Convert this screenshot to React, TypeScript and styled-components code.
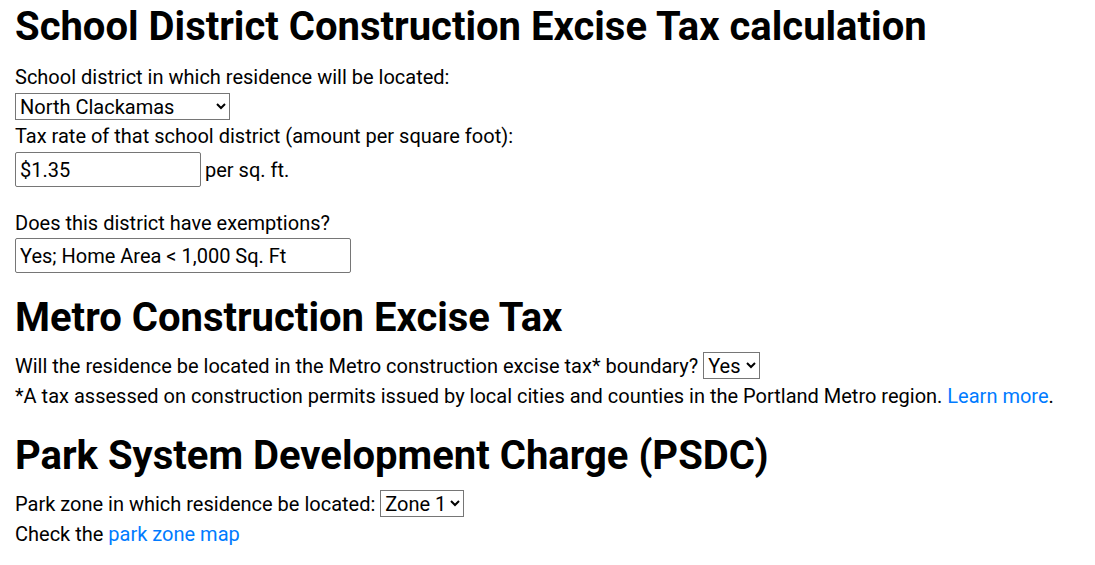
import React from "react";
import styled, { createGlobalStyle } from "styled-components";

const GlobalStyle = createGlobalStyle`
  html, body { margin: 0; padding: 0; background: #fff; }
  body {
    font-family: Roboto, "Liberation Sans", Arial, sans-serif;
    font-size: 20px;
    line-height: 30px;
    color: #000;
  }
`;

const Page = styled.main`
  padding: 3px 15px 0 15px;
`;

const Heading = styled.h1<{ $top?: number; $bottom?: number }>`
  margin: ${(p) => p.$top ?? 21}px 0 ${(p) => p.$bottom ?? 9}px 0;
  font-size: 40px;
  line-height: 48px;
  font-weight: 700;
  color: #000;
`;

const Label = styled.div<{ $top?: number }>`
  margin-top: ${(p) => p.$top ?? 0}px;
  line-height: 30px;
`;

const Line = styled.div`
  line-height: 30px;
`;

const FieldRow = styled.div<{ $top?: number; $bottom?: number }>`
  margin: ${(p) => p.$top ?? 0}px 0 ${(p) => p.$bottom ?? 0}px 0;
  display: flex;
  align-items: center;
  gap: 4px;
`;

const Select = styled.select<{ $w: number }>`
  width: ${(p) => p.$w}px;
  height: 27px;
  box-sizing: border-box;
  font-family: Roboto, "Liberation Sans", Arial, sans-serif;
  font-size: 20px;
  color: #000;
  background: #fff;
  border: 1px solid #767676;
  border-radius: 0;
  padding: 0;
  vertical-align: baseline;
`;

const TextInput = styled.input<{ $w: number }>`
  width: ${(p) => p.$w}px;
  height: 35px;
  box-sizing: border-box;
  padding: 0 4px;
  font-family: Roboto, "Liberation Sans", Arial, sans-serif;
  font-size: 20px;
  color: #000;
  background: #fff;
  border: 1px solid #767676;
  border-radius: 2px;
`;

const Link = styled.a`
  color: #007bff;
  text-decoration: none;
`;

export default function App() {
  return (
    <>
      <GlobalStyle />
      <Page>
        <Heading $top={0} $bottom={11}>
          School District Construction Excise Tax calculation
        </Heading>
        <Label>School district in which residence will be located:</Label>
        <FieldRow $top={1} $bottom={1}>
          <Select $w={215} defaultValue="nc">
            <option value="nc">North Clackamas</option>
            <option value="other">Other school district</option>
          </Select>
        </FieldRow>
        <Label>Tax rate of that school district (amount per square foot):</Label>
        <FieldRow $top={1}>
          <TextInput $w={186} defaultValue="$1.35" />
          <span>per sq. ft.</span>
        </FieldRow>
        <Label $top={21}>Does this district have exemptions?</Label>
        <FieldRow>
          <TextInput $w={336} defaultValue="Yes; Home Area < 1,000 Sq. Ft" />
        </FieldRow>

        <Heading as="h2">Metro Construction Excise Tax</Heading>
        <Line>
          Will the residence be located in the Metro construction excise tax*
          boundary?{" "}
          <Select $w={57} defaultValue="yes">
            <option value="yes">Yes</option>
            <option value="no">No</option>
          </Select>
        </Line>
        <Line>
          *A tax assessed on construction permits issued by local cities and
          counties in the Portland Metro region.{" "}
          <Link href="#">Learn more</Link>.
        </Line>

        <Heading as="h2">Park System Development Charge (PSDC)</Heading>
        <Line>
          Park zone in which residence be located:{" "}
          <Select $w={84} defaultValue="1">
            <option value="1">Zone 1</option>
            <option value="2">Zone 2</option>
          </Select>
        </Line>
        <Line>
          Check the <Link href="#">park zone map</Link>
        </Line>
      </Page>
    </>
  );
}
